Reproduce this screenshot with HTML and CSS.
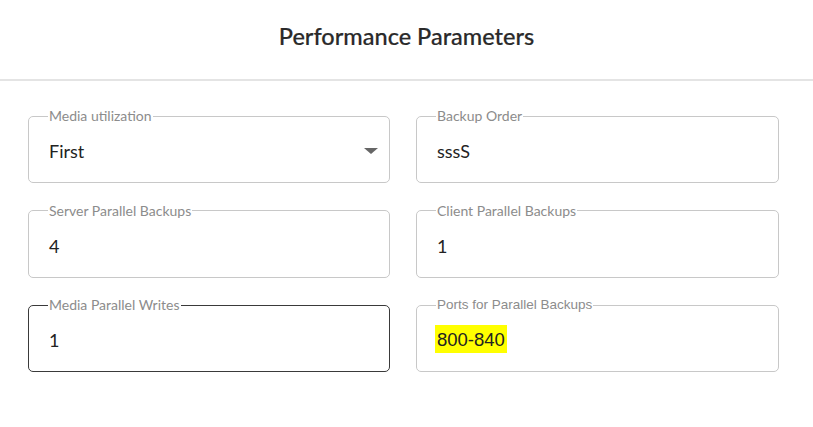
FILE: index.html
```html
<!DOCTYPE html>
<html>
<head>
<meta charset="utf-8">
<link rel="stylesheet" href="styles.css">
</head>
<body>
<header class="header">
  <h1 class="title">Performance Parameters</h1>
</header>
<main class="form">
  <fieldset class="field">
    <legend class="label">Media utilization</legend>
    <div class="value select">
      <span>First</span>
      <span class="arrow"></span>
    </div>
  </fieldset>
  <fieldset class="field">
    <legend class="label">Backup Order</legend>
    <div class="value">sssS</div>
  </fieldset>
  <fieldset class="field">
    <legend class="label">Server Parallel Backups</legend>
    <div class="value">4</div>
  </fieldset>
  <fieldset class="field">
    <legend class="label">Client Parallel Backups</legend>
    <div class="value">1</div>
  </fieldset>
  <fieldset class="field active">
    <legend class="label">Media Parallel Writes</legend>
    <div class="value">1</div>
  </fieldset>
  <fieldset class="field arial">
    <legend class="label">Ports for Parallel Backups</legend>
    <div class="value"><mark class="hl">800-840</mark></div>
  </fieldset>
</main>
</body>
</html>
```
FILE: styles.css
```css
* { box-sizing: border-box; }
body {
  margin: 0;
  background: #fff;
  font-family: "Lato", "Open Sans", sans-serif;
  color: #222;
}
.header {
  height: 81px;
  border-bottom: 2px solid #e4e4e4;
  display: flex;
  align-items: flex-start;
  justify-content: center;
}
.title {
  margin: 22px 0 0 0;
  font-size: 23.5px;
  line-height: 28px;
  font-weight: 500;
  color: #2a2a2a;
  -webkit-text-stroke: 0.2px #2a2a2a;
}
.form {
  display: grid;
  grid-template-columns: 362px 363px;
  column-gap: 26px;
  row-gap: 19.5px;
  padding: 27px 0 0 28px;
}
.field {
  margin: 0;
  padding: 0 20px 0 20px;
  border: 1px solid #c8c8c8;
  border-radius: 5px;
  height: 75px;
  min-width: 0;
}
.field.active {
  border: 1.5px solid #3a3a3a;
}
.label {
  font-size: 14px;
  line-height: 16px;
  height: 16px;
  color: #8c8c8c;
  padding: 0 1px;
  margin-left: -1px;
}
.value {
  font-size: 18px;
  line-height: 22px;
  padding-top: 16px;
  color: #222;
}
.select {
  display: flex;
  justify-content: space-between;
  align-items: center;
}
.arrow {
  width: 0;
  height: 0;
  border-left: 7px solid transparent;
  border-right: 7px solid transparent;
  border-top: 6px solid #666;
  margin-right: -9px;
}
.arial .label {
  font-family: "Liberation Sans", Arial, sans-serif;
  font-size: 13.5px;
}
.arial .value {
  font-family: "Liberation Sans", Arial, sans-serif;
  font-size: 18.5px;
}
.hl {
  background: #ffff00;
  color: #222;
  padding: 4px 2px 3px 2px;
  margin-left: -2px;
}
```
